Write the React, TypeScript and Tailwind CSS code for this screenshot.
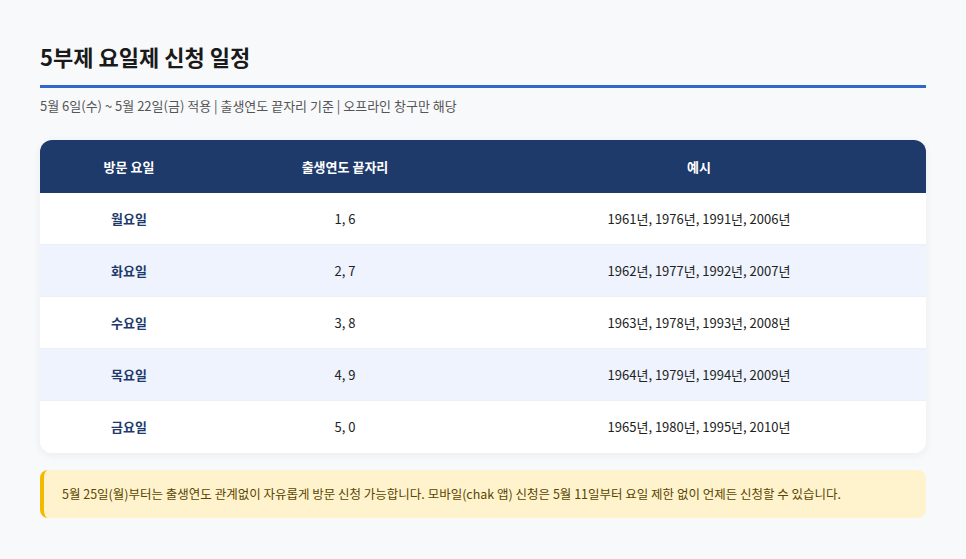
import React from "react";

const rows = [
  ["월요일", "1, 6", "1961년, 1976년, 1991년, 2006년"],
  ["화요일", "2, 7", "1962년, 1977년, 1992년, 2007년"],
  ["수요일", "3, 8", "1963년, 1978년, 1993년, 2008년"],
  ["목요일", "4, 9", "1964년, 1979년, 1994년, 2009년"],
  ["금요일", "5, 0", "1965년, 1980년, 1995년, 2010년"],
];

export default function App() {
  return (
    <div
      className="min-h-[559px] w-full bg-[#f8f9fb] px-10 pt-[40px] pb-10"
      style={{ fontFamily: '"Noto Sans CJK KR", "Noto Sans", sans-serif' }}
    >
      <h1 className="border-b-[3px] border-[#3366cc] pb-[13px] text-[22px] font-bold leading-[32px] text-[#1a1a1a]">
        5부제 요일제 신청 일정
      </h1>
      <p className="mt-[8px] text-[13px] leading-[20px] text-[#555]">
        5월 6일(수) ~ 5월 22일(금) 적용 | 출생연도 끝자리 기준 | 오프라인 창구만 해당
      </p>
      <div className="mt-[24px] overflow-hidden rounded-[12px] bg-white shadow-[0_2px_10px_rgba(0,0,0,0.06)]">
        <div className="flex h-[53px] items-center bg-[#1e3a6b] text-[13px] font-bold text-white">
          <div className="w-[178px] text-center">방문 요일</div>
          <div className="w-[254px] text-center">출생연도 끝자리</div>
          <div className="flex-1 text-center">예시</div>
        </div>
        {rows.map((r, i) => (
          <div
            key={r[0]}
            className={`flex h-[52px] items-center text-[13px] text-[#222] ${
              i % 2 === 1 ? "bg-[#eef3fd]" : "bg-white"
            } ${i < rows.length - 1 ? "border-b border-[#eef0f4]" : ""}`}
          >
            <div className="w-[178px] text-center font-bold text-[#1e3a6b]">{r[0]}</div>
            <div className="w-[254px] text-center">{r[1]}</div>
            <div className="flex-1 text-center">{r[2]}</div>
          </div>
        ))}
      </div>
      <div className="mt-[17px] rounded-[8px] border-l-4 border-[#f5b800] bg-[#fff3cd] px-[18px] py-[14px] text-[12.5px] leading-[20px] text-[#5a4500]">
        5월 25일(월)부터는 출생연도 관계없이 자유롭게 방문 신청 가능합니다. 모바일(chak 앱) 신청은 5월 11일부터 요일 제한 없이 언제든 신청할 수 있습니다.
      </div>
    </div>
  );
}
